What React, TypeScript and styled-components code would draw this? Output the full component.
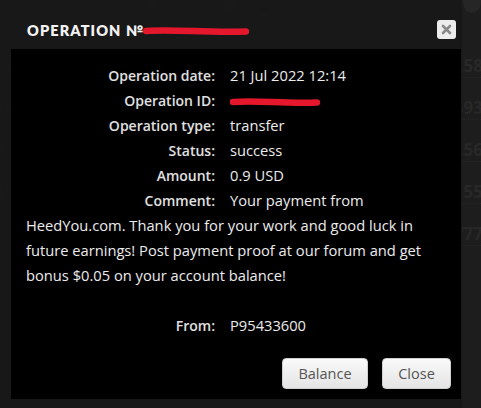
import React from "react";
import styled, { createGlobalStyle } from "styled-components";

const GlobalStyle = createGlobalStyle`
  html, body {
    margin: 0;
    padding: 0;
    background: #1d1d1d;
  }
  body {
    width: 481px;
    height: 408px;
    overflow: hidden;
    font-family: "Open Sans", "Liberation Sans", sans-serif;
  }
`;

const Page = styled.div`
  position: relative;
  width: 481px;
  height: 408px;
  overflow: hidden;
  background: #1d1d1d;
`;

// faint page content behind the dialog
const PageHeader = styled.div`
  display: flex;
  align-items: center;
  height: 20px;
  margin-top: -8px;
  padding-left: 146px;
  gap: 14px;
  color: #2e2e2e;
  font-size: 20px;
`;

const Badge = styled.span<{ $size: number }>`
  display: inline-block;
  width: ${(p) => p.$size}px;
  height: ${(p) => p.$size}px;
  border-radius: 50%;
  background: #262626;
`;

const Account = styled.span`
  margin-left: 8px;
  margin-right: 58px;
  letter-spacing: 0.5px;
`;

const Rows = styled.div`
  display: flex;
  flex-direction: column;
  margin-top: 33px;
`;

const PageRow = styled.div`
  display: flex;
  justify-content: space-between;
  align-items: center;
  height: 42px;
  font-size: 17px;
  font-weight: 700;
  color: #282828;
`;

const Cell = styled.span<{ $shift: number }>`
  border-bottom: 1px dotted #262626;
  transform: translateX(${(p) => p.$shift}px);
`;

const Dialog = styled.div`
  position: absolute;
  left: 0;
  top: 0;
  width: 462px;
  height: 410px;
  background: rgba(24, 24, 24, 0.95);
  display: flex;
  flex-direction: column;
`;

const DialogHeader = styled.div`
  display: flex;
  align-items: center;
  height: 49px;
  padding: 0 6px 0 27px;
  box-sizing: border-box;
`;

const Title = styled.h2`
  display: flex;
  align-items: center;
  margin: 0;
  flex: 1;
  padding-top: 12px;
  font-family: "Lato", "Liberation Sans", sans-serif;
  font-size: 14.5px;
  font-weight: 800;
  letter-spacing: 1.1px;
  color: #f2f2f2;
`;

const TitleMark = styled.span`
  margin-left: -1px;
`;

const CloseIcon = styled.button`
  width: 19px;
  height: 19px;
  margin-top: 10px;
  padding: 0;
  border: none;
  border-radius: 3px;
  background: #ececec;
  display: flex;
  align-items: center;
  justify-content: center;
`;

const Body = styled.div`
  margin-left: 11px;
  width: 450px;
  height: 350px;
  background: #000;
  box-sizing: border-box;
  padding: 14px 15px 0 15px;
  display: flex;
  flex-direction: column;
`;

const Details = styled.div`
  font-size: 14px;
  line-height: 25px;
  color: #e6e6e6;
`;

const Line = styled.div<{ $gapAfter?: boolean }>`
  margin-bottom: ${(p) => (p.$gapAfter ? "25px" : "0")};
`;

const Label = styled.span`
  display: inline-block;
  width: 189px;
  margin-right: 15px;
  text-align: right;
  font-weight: 600;
  color: #e0e0e0;
`;

const Value = styled.span`
  font-size: 14.7px;
  color: #ececec;
`;

const IdMark = styled.span`
  display: inline-block;
  vertical-align: middle;
`;

const Footer = styled.div`
  display: flex;
  justify-content: flex-end;
  gap: 14px;
  margin-top: 20px;
  margin-right: -5px;
`;

const Button = styled.button<{ $width: number }>`
  width: ${(p) => p.$width}px;
  height: 31px;
  border: 1px solid #d0d0d0;
  border-radius: 4px;
  background: linear-gradient(#fafafa, #e4e4e4);
  font-family: "Open Sans", "Liberation Sans", sans-serif;
  font-size: 14.5px;
  color: #555;
  cursor: pointer;
`;

const Scribble: React.FC<{ width: number }> = ({ width }) => (
  <svg width={width} height="10" viewBox={`0 0 ${width} 10`} style={{ display: "block" }}>
    <path
      d={`M3 5 C ${width * 0.3} 3, ${width * 0.6} 7, ${width - 3} 5.5`}
      stroke="#e5172c"
      strokeWidth="6.5"
      strokeLinecap="round"
      fill="none"
    />
  </svg>
);

const App: React.FC = () => (
  <>
    <GlobalStyle />
    <Page>
      <PageHeader>
        <Badge $size={16} />
        <Badge $size={20} style={{ marginLeft: 48 }} />
        <Account>P1055798072 ▾</Account>
        <Badge $size={22} />
      </PageHeader>
      <Rows>
        {[
          ["11", "1.58"],
          ["50", "593"],
          ["97", "1.56"],
          ["43", "1.55"],
          ["1", "777"],
        ].map(([l, r]) => (
          <PageRow key={l}>
            <Cell $shift={-6}>{l}</Cell>
            <Cell $shift={2}>{r}</Cell>
          </PageRow>
        ))}
      </Rows>

      <Dialog>
        <DialogHeader>
          <Title>
            OPERATION №
            <TitleMark>
              <Scribble width={106} />
            </TitleMark>
          </Title>
          <CloseIcon aria-label="close">
            <svg width="11" height="11" viewBox="0 0 11 11">
              <path d="M2 2 L9 9 M9 2 L2 9" stroke="#8a8a8a" strokeWidth="2.6" strokeLinecap="round" />
            </svg>
          </CloseIcon>
        </DialogHeader>
        <Body>
          <Details>
            <Line>
              <Label>Operation date:</Label>
              <Value>21 Jul 2022 12:14</Value>
            </Line>
            <Line>
              <Label>Operation ID:</Label>
              <IdMark>
                <Scribble width={90} />
              </IdMark>
            </Line>
            <Line>
              <Label>Operation type:</Label>
              <Value>transfer</Value>
            </Line>
            <Line>
              <Label>Status:</Label>
              <Value>success</Value>
            </Line>
            <Line>
              <Label>Amount:</Label>
              <Value>0.9 USD</Value>
            </Line>
            <Line $gapAfter>
              <Label>Comment:</Label>
              <Value>
                Your payment from HeedYou.com. Thank you for your work and good luck in future
                earnings! Post payment proof at our forum and get bonus $0.05 on your account
                balance!
              </Value>
            </Line>
            <Line>
              <Label>From:</Label>
              <Value>P95433600</Value>
            </Line>
          </Details>
          <Footer>
            <Button $width={86}>Balance</Button>
            <Button $width={69}>Close</Button>
          </Footer>
        </Body>
      </Dialog>
    </Page>
  </>
);

export default App;
